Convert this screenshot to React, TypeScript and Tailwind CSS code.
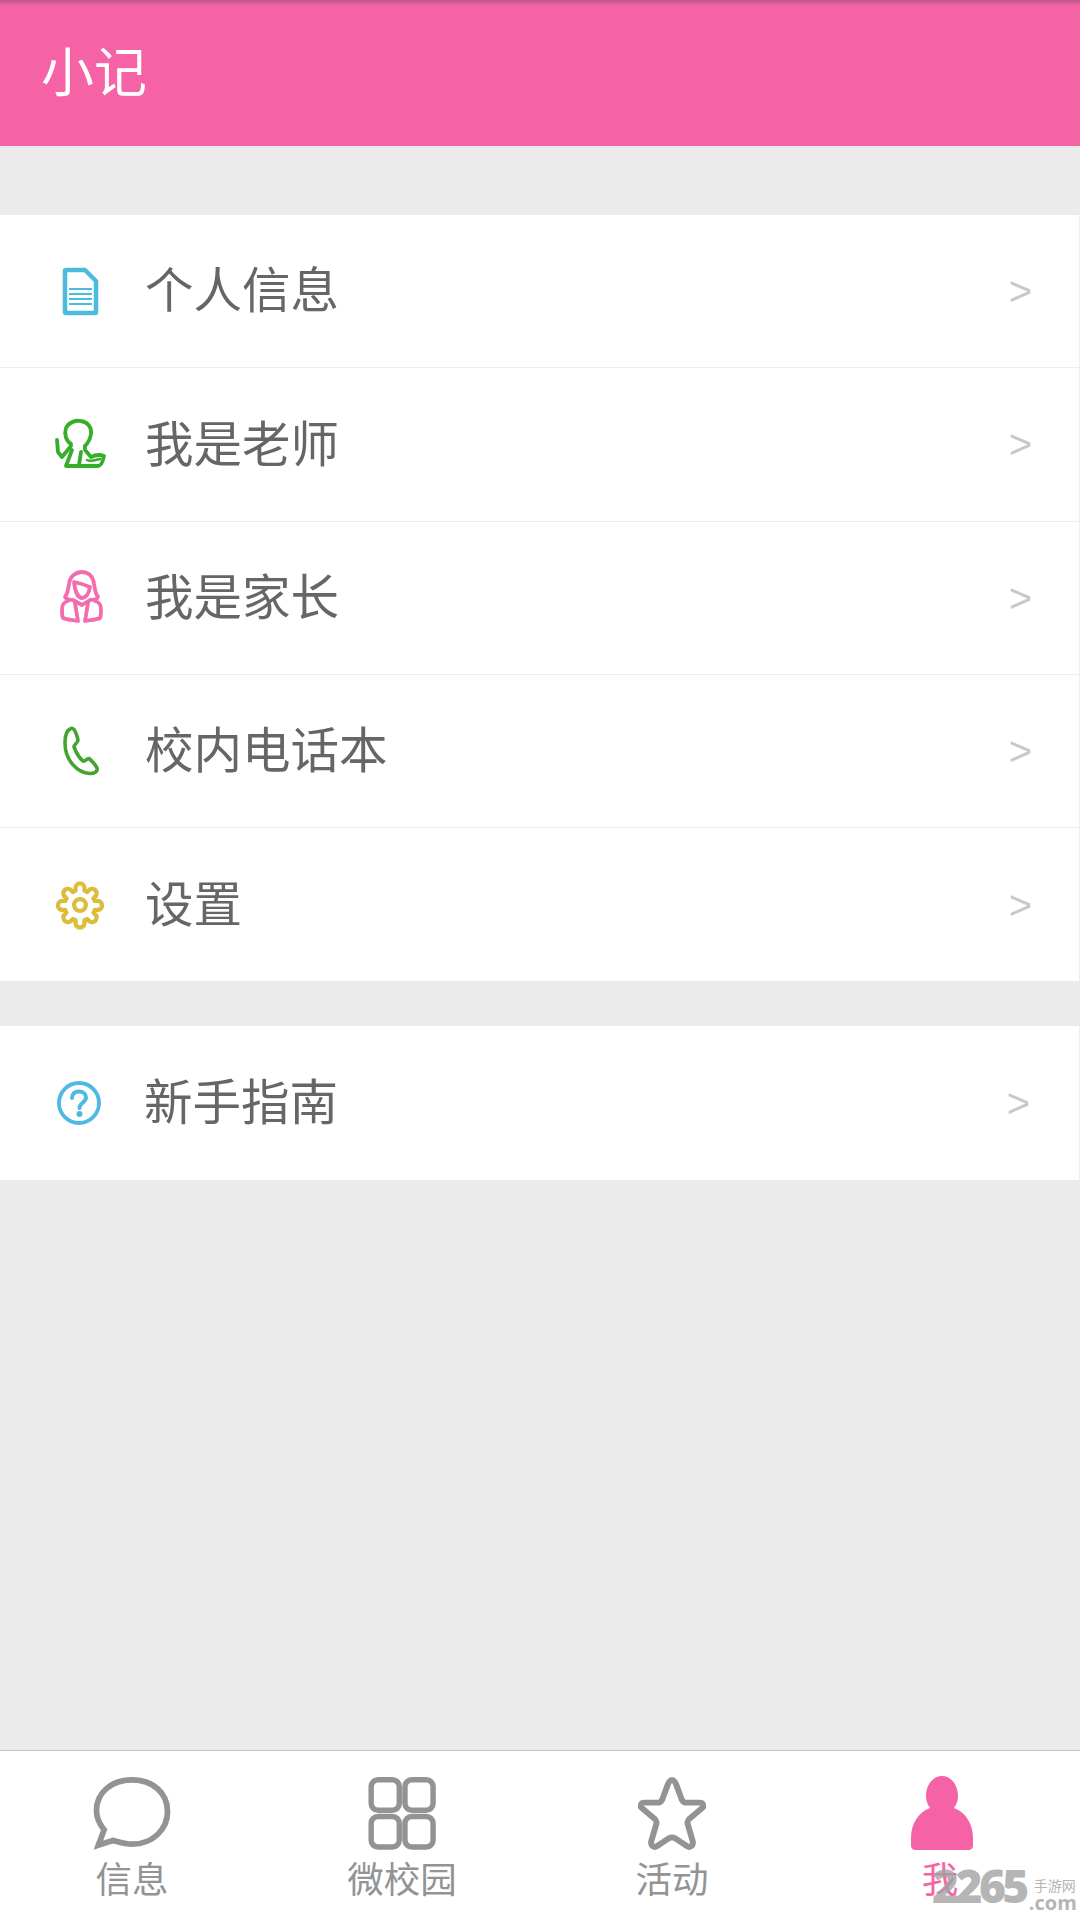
const FONT = "font-['Roboto','Noto_Sans_CJK_SC',sans-serif]"

function DocIcon() {
  return (
    <svg width="50" height="50" viewBox="0 0 50 50" fill="none" stroke="#4dbcdc" className="overflow-visible">
      <path d="M11 4H30L41 15V46a1 1 0 0 1-1 1H11a1 1 0 0 1-1-1V5a1 1 0 0 1 1-1Z" strokeWidth="4.500" strokeLinejoin="round" />
      <path d="M32 1 L44 13" stroke="#fff" strokeWidth="2" />
      <path d="M14 23H37M14 28H37M14 33H37M14 38H37" strokeWidth="2.200" />
    </svg>
  )
}

function TeacherIcon() {
  return (
    <svg width="50" height="50" viewBox="0 0 50 50" fill="none" stroke="#35ae2a" strokeWidth="3.800" strokeLinejoin="round" strokeLinecap="round" className="overflow-visible">
      <path d="M16 25C11 22 9 15 11 9C14 3 21 1 26 2C33 3 37 9 36 15C35 21 32 25 30 27" />
      <path d="M16 27L7 38L3 33L2 21" />
      <path d="M17 31L11 47H43C46 47 48 42 49 37C44 35 40 36 36 38L30 31L30 27" />
      <path d="M26 33L24 46" />
      <path d="M32 41C36 43 40 41 45 40" strokeWidth="2.500" />
    </svg>
  )
}

function ParentIcon() {
  return (
    <svg width="50" height="50" viewBox="0 0 50 50" fill="none" stroke="#f26cae" strokeWidth="3.800" strokeLinejoin="round" strokeLinecap="round" className="overflow-visible">
      <path d="M10 24C13 20 13 16 14 11C15 3 21 -1 27 -1C33 -1 38 3 39 11C40 16 40 20 43 24C42 27 38 27 35 27L27 32L18 27C15 27 12 27 10 24Z" />
      <path d="M19 9C24 10 28 11 35 14C34 20 31 25 27 25C23 25 20 18 19 9Z" />
      <path d="M13 28C9 29 7 31 7 37C7 40 7 43 8 45C12 47 18 47 23 48L20 30" />
      <path d="M40 28C44 29 46 31 46 37C46 40 46 43 45 45C41 47 35 47 30 48L33 30" />
    </svg>
  )
}

function PhoneIcon() {
  return (
    <svg width="50" height="50" viewBox="0 0 50 50" fill="none" stroke="#45a431" strokeWidth="3.600" strokeLinejoin="round">
      <path d="M16 2.500C12 4 10 9 10 17C10 34 22 47 35 47.500C39 47.500 43 46 42 42C40 38 37 35 34 32.500C32 32 30 36 28 35C24 32 21 26 19 21C19 18 23 17 23 14C22 10 21 6 19 3.500C18 2.500 17 2 16 2.500Z" />
    </svg>
  )
}

function GearIcon() {
  return (
    <svg width="50" height="50" viewBox="0 0 50 50" fill="none" stroke="#dcbc3c" strokeWidth="4.800" strokeLinejoin="round">
      <g transform="translate(2.500 2.500) scale(0.9)">
        <path d="M20 6a5 5 0 0 1 10 0v3l3 1.500 2.500-2.500a5 5 0 0 1 7 7l-2.500 2.500 1.500 3h3a5 5 0 0 1 0 10h-3l-1.500 3 2.500 2.500a5 5 0 0 1-7 7l-2.500-2.500-3 1.500v3a5 5 0 0 1-10 0v-3l-3-1.500-2.500 2.500a5 5 0 0 1-7-7l2.500-2.500-1.500-3h-3a5 5 0 0 1 0-10h3l1.500-3-2.500-2.500a5 5 0 0 1 7-7l2.500 2.500 3-1.500Z" />
        <circle cx="25" cy="25" r="6.500" />
      </g>
    </svg>
  )
}

function HelpIcon() {
  return (
    <svg width="50" height="50" viewBox="0 0 50 50" fill="none" stroke="#4fb9e3">
      <circle cx="25" cy="25" r="20" strokeWidth="3.800" />
      <path d="M18 20C18 15.500 21 13.500 25 13.500C29 13.500 32 16 32 19.500C32 24.500 25.500 24.500 25.500 30" strokeWidth="4" strokeLinecap="round" />
      <circle cx="25.500" cy="36" r="3" fill="#4fb9e3" stroke="none" />
    </svg>
  )
}

function ChatTab() {
  return (
    <svg width="78" height="73" viewBox="0 0 80 76" fill="none" stroke="#939393" strokeWidth="6">
      <path d="M11 55C6 49 3 43 3 35C3 16 19 3 40 3C61 3 77 16 77 36C77 55 61 70 40 70C33 70 27 68 20 66L5 71Z" strokeLinejoin="miter" />
    </svg>
  )
}

function GridTab() {
  return (
    <svg width="68" height="73" viewBox="0 0 68 74" fill="none" stroke="#939393" strokeWidth="5.500">
      <rect x="2.750" y="2.750" width="28.500" height="31" rx="7" />
      <rect x="37" y="2.750" width="28.500" height="31" rx="7" />
      <rect x="2.750" y="40" width="28.500" height="31" rx="7" />
      <rect x="37" y="40" width="28.500" height="31" rx="7" />
    </svg>
  )
}

function StarTab() {
  return (
    <svg width="68" height="73" viewBox="0 0 68 74" fill="none" stroke="#939393" strokeWidth="6" strokeLinejoin="round">
      <path d="M34 3C36 3 37 5 38 7L44 23C45 25 46 26 48 26L62 26C66 26 67 30 64 32L52 42C50 44 49 46 50 48L55 65C56 70 52 72 49 70L37 62C35 61 33 61 31 62L19 70C16 72 12 70 13 65L18 48C19 46 18 44 16 42L4 32C1 30 2 26 6 26L20 26C22 26 23 25 24 23L30 7C31 5 32 3 34 3Z" />
    </svg>
  )
}

function PersonTab() {
  return (
    <svg width="64" height="74" viewBox="0 0 64 74" fill="#f662a6">
      <path d="M32 0C41 0 48 9 48 20C48 24 47 28 44 32C55 36 63 47 63 62V70C63 72 61 74 59 74H5C3 74 1 72 1 70V62C1 47 9 36 20 32C17 28 16 24 16 20C16 9 23 0 32 0Z" />
    </svg>
  )
}

const items = [
  { icon: <DocIcon />, label: "个人信息" },
  { icon: <TeacherIcon />, label: "我是老师" },
  { icon: <ParentIcon />, label: "我是家长" },
  { icon: <PhoneIcon />, label: "校内电话本" },
  { icon: <GearIcon />, label: "设置" },
]

function Row({ icon, label, last, shifted }: { icon: React.ReactNode; label: string; last?: boolean; shifted?: boolean }) {
  return (
    <div
      className={`flex h-[153.25px] items-center bg-white border-r border-[#eeeeee] ${last ? "" : "border-b"} ${
        shifted ? "pl-[54px] pr-[49px]" : "pl-[55px] pr-[47px]"
      }`}
    >
      <div className="w-[50px] h-[50px] shrink-0">{icon}</div>
      <span className="ml-[40px] pt-[3px] flex-1 text-[48.500px] leading-none text-[#666666]">{label}</span>
      <span className="text-[40px] leading-none text-[#c8c8c8] font-['Liberation_Sans',sans-serif]">&gt;</span>
    </div>
  )
}

const tabs = [
  { icon: <ChatTab />, label: "信息" },
  { icon: <GridTab />, label: "微校园" },
  { icon: <StarTab />, label: "活动" },
  { icon: <PersonTab />, label: "我", active: true },
]

export default function App() {
  return (
    <div className={`${FONT} w-[1080px] h-[1920px] flex flex-col bg-[#ebebeb] relative overflow-hidden`}>
      <header className="h-[146px] bg-[#f662a6] relative flex items-center pl-[41px] pt-[2px]">
        <div className="absolute top-0 inset-x-0 h-[6px] bg-gradient-to-b from-[#b9588c] to-[#f662a6]"></div>
        <span className="text-[53px] leading-none text-white">小记</span>
      </header>

      <main className="flex-1 pt-[69px]">
        {items.map((item, i) => (
          <Row key={item.label} icon={item.icon} label={item.label} last={i === items.length - 1} />
        ))}
        <div className="mt-[45px]">
          <Row icon={<HelpIcon />} label="新手指南" last shifted />
        </div>
      </main>

      <nav className="h-[170px] bg-white border-t border-[#c4c4c4] grid grid-cols-4">
        {tabs.map((tab) => (
          <div key={tab.label} className="flex flex-col items-center pt-[25px] pr-[6px]">
            <div className="h-[74px] flex items-center justify-center">{tab.icon}</div>
            <span className={`mt-[8px] text-[36.500px] leading-[46px] ${tab.active ? "text-[#f662a6] mr-[4px]" : "text-[#939393]"}`}>
              {tab.label}
            </span>
          </div>
        ))}
      </nav>

      {/* 2265 watermark */}
      <div className="absolute left-[932px] top-[1862px] w-[148px] flex items-start whitespace-nowrap opacity-80 text-[#a3a3a3]">
        <span className="shrink-0 text-[46px] leading-[46px] font-extrabold tracking-[-3.5px] font-['Open_Sans',sans-serif]">2265</span>
        <div className="ml-[3px] mt-[17px] flex flex-col items-start">
          <span className="ml-[5px] text-[14px] leading-[15px]">手游网</span>
          <span className="text-[20px] leading-[17px] font-bold font-['Open_Sans',sans-serif]">.com</span>
        </div>
      </div>
    </div>
  )
}
